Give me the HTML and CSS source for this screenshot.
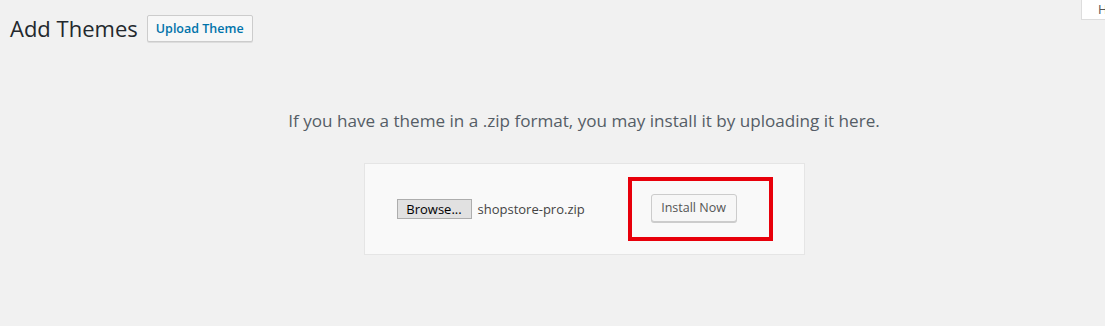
FILE: index.html
```html
<!DOCTYPE html>
<html lang="en">
<head>
    <meta charset="UTF-8">
    <meta name="viewport" content="width=device-width, initial-scale=1.0">
    <title>Add Themes</title>
    <link rel="stylesheet" href="styles.css">
</head>
<body>
    <div class="help-tab">Help</div>
    <div class="wrap">
        <div class="heading">
            <h1 class="title">Add Themes</h1>
            <button class="upload-btn">Upload Theme</button>
        </div>
        <div class="upload-theme">
            <p class="install-help">If you have a theme in a .zip format, you may install it by uploading it here.</p>
            <form class="upload-form">
                <div class="file-field">
                    <span class="browse">Browse...</span>
                    <span class="file-name">shopstore-pro.zip</span>
                </div>
                <button type="button" class="install-btn">Install Now</button>
                <div class="highlight"></div>
            </form>
        </div>
    </div>
</body>
</html>
```

FILE: styles.css
```css
    body {
        margin: 0;
        background: #f1f1f1;
        font-family: "Open Sans", "Noto Sans", sans-serif;
        color: #444;
        overflow: hidden;
    }
    .help-tab {
        position: absolute;
        top: 0;
        left: 1081px;
        width: 60px;
        height: 19px;
        background: #fff;
        border: 1px solid #ddd;
        border-top: none;
        font-size: 13px;
        line-height: 19px;
        color: #555;
        padding-left: 16px;
    }
    .wrap {
        padding: 13px 0 0 10px;
    }
    .heading {
        display: flex;
        align-items: center;
        gap: 9px;
    }
    .title {
        margin: 0;
        font-size: 22px;
        font-weight: 400;
        color: #23282d;
        line-height: 30px;
    }
    .upload-btn {
        height: 27px;
        width: 106px;
        padding: 0;
        background: #f7f7f7;
        border: 1px solid #ccc;
        border-radius: 2px;
        box-shadow: 0 1px 0 #ddd;
        color: #0073aa;
        font-family: inherit;
        font-size: 12.5px;
        font-weight: 600;
        margin-top: 1px;
    }
    .upload-theme {
        padding-left: 53px;
        text-align: center;
    }
    .install-help {
        margin: 65px 0 0;
        font-size: 17.1px;
        line-height: 26px;
        color: #555d66;
    }
    .upload-form {
        display: inline-flex;
        align-items: center;
        position: relative;
        width: 441px;
        height: 92px;
        margin-top: 29px;
        box-sizing: border-box;
        padding-left: 32px;
        background: #f9f9f9;
        border: 1px solid #e5e5e5;
        text-align: left;
    }
    .file-field {
        display: flex;
        align-items: center;
        width: 254px;
    }
    .browse {
        width: 75px;
        height: 20px;
        box-sizing: border-box;
        background: #e1e1e1;
        border: 1px solid #adadad;
        font-size: 13px;
        line-height: 18px;
        color: #000;
        text-align: center;
    }
    .file-name {
        margin-left: 6px;
        font-size: 13px;
        color: #444;
    }
    .install-btn {
        width: 86px;
        height: 28px;
        padding: 0;
        background: #f7f7f7;
        border: 1px solid #ccc;
        border-radius: 3px;
        box-shadow: 0 1px 0 #ccc;
        color: #555;
        font-family: inherit;
        font-size: 12.5px;
        margin-top: -3px;
    }
    .highlight {
        position: absolute;
        left: 263px;
        top: 13px;
        width: 137px;
        height: 56px;
        border: 4px solid #e8000b;
    }
```
